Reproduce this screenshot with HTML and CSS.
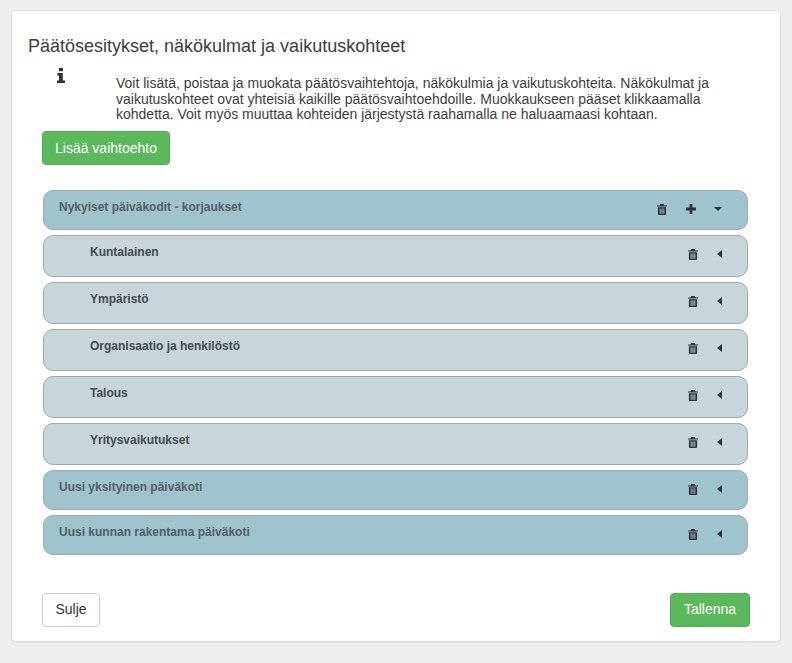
FILE: index.html
```html
<!DOCTYPE html>
<html lang="fi">
<head>
<meta charset="utf-8">
<title>Päätösesitykset</title>
<link rel="stylesheet" href="styles.css">
<svg class="sprite" width="0" height="0" aria-hidden="true">
  <symbol id="trash" viewBox="0 0 11 12">
    <path fill-rule="evenodd" d="M3.6 0h3.8l.8 1.5H11v1.2H0V1.5h2.8zM1 3.4h9V11a1 1 0 0 1-1 1H2a1 1 0 0 1-1-1zM3 4.8v5.8h1V4.8zm2 0v5.8h1V4.8zm2 0v5.8h1V4.8z"/>
  </symbol>
</svg>
</head>
<body>
<main class="card">
  <h1 class="title">Päätösesitykset, näkökulmat ja vaikutuskohteet</h1>
  <div class="info">
    <svg class="info-icon" viewBox="0 0 8 15" aria-hidden="true"><path d="M2 0h4v3.2H2zM.4 5h5.4v7.6H8V15H0v-2.4h2V7.4H.4z"/></svg>
    <p class="info-text">Voit lisätä, poistaa ja muokata päätösvaihtehtoja, näkökulmia ja vaikutuskohteita. Näkökulmat ja vaikutuskohteet ovat yhteisiä kaikille päätösvaihtoehdoille. Muokkaukseen pääset klikkaamalla kohdetta. Voit myös muuttaa kohteiden järjestystä raahamalla ne haluaamaasi kohtaan.</p>
  </div>
  <button class="btn btn-green add">Lisää vaihtoehto</button>
  <ul class="list">
    <li class="row parent first">
      <span class="label">Nykyiset päiväkodit - korjaukset</span>
      <span class="icons wide">
        <svg class="trash"><use href="#trash"/></svg>
        <svg class="plus" viewBox="0 0 10 10"><path d="M3.6 0h2.8v3.6H10v2.8H6.4V10H3.6V6.4H0V3.6h3.6z"/></svg>
        <i class="caret-down"></i>
      </span>
    </li>
    <li class="row child"><span class="label">Kuntalainen</span><span class="icons"><svg class="trash"><use href="#trash"/></svg><i class="caret-left"></i></span></li>
    <li class="row child"><span class="label">Ympäristö</span><span class="icons"><svg class="trash"><use href="#trash"/></svg><i class="caret-left"></i></span></li>
    <li class="row child"><span class="label">Organisaatio ja henkilöstö</span><span class="icons"><svg class="trash"><use href="#trash"/></svg><i class="caret-left"></i></span></li>
    <li class="row child"><span class="label">Talous</span><span class="icons"><svg class="trash"><use href="#trash"/></svg><i class="caret-left"></i></span></li>
    <li class="row child"><span class="label">Yritysvaikutukset</span><span class="icons"><svg class="trash"><use href="#trash"/></svg><i class="caret-left"></i></span></li>
    <li class="row parent"><span class="label">Uusi yksityinen päiväkoti</span><span class="icons"><svg class="trash"><use href="#trash"/></svg><i class="caret-left"></i></span></li>
    <li class="row parent"><span class="label">Uusi kunnan rakentama päiväkoti</span><span class="icons"><svg class="trash"><use href="#trash"/></svg><i class="caret-left"></i></span></li>
  </ul>
  <footer class="actions">
    <button class="btn btn-white close">Sulje</button>
    <button class="btn btn-green save">Tallenna</button>
  </footer>
</main>
</body>
</html>
```
FILE: styles.css
```css
* { box-sizing: border-box; }
html, body { height: 100%; }
body {
  margin: 0;
  padding: 10px 11px 21px 11px;
  background: #eeeeee;
  font-family: "Liberation Sans", Arial, sans-serif;
  color: #333;
}
.sprite { position: absolute; }
.card {
  width: 770px;
  height: 632px;
  padding: 25px 31px 0 16px;
  background: #fff;
  border: 1px solid #ddd;
  border-radius: 4px;
  box-shadow: 0 1px 1px rgba(0,0,0,.05);
}
.title {
  margin: 0;
  font-size: 18px;
  font-weight: 400;
  line-height: 20px;
  color: #3d3d3d;
}
.info {
  display: flex;
  height: 57px;
  margin-left: 29px;
  padding-top: 15px;
}
.info-icon {
  width: 8px;
  height: 15px;
  margin-top: -3px;
  fill: #333;
  flex: none;
}
.info-text {
  margin: 5px 0 0 51px;
  width: 610px;
  font-size: 14px;
  line-height: 15.5px;
  color: #3d3d3d;
}
.btn {
  display: block;
  height: 34px;
  padding: 0 12px;
  font: 14px/32px "Liberation Sans", Arial, sans-serif;
  border: 1px solid transparent;
  border-radius: 4px;
}
.btn-green { background: #5cb85c; border-color: #4cae4c; color: #fff; }
.btn-white { background: #fff; border-color: #ccc; color: #333; }
.add { margin: 18px 0 0 14px; }
.close { width: 58px; padding: 0 0 2px; line-height: 30px; }
.save { width: 80px; padding: 0 0 2px; line-height: 30px; }
.list {
  list-style: none;
  margin: 25px 0 0 15px;
  padding: 0;
  width: 705px;
  display: flex;
  flex-direction: column;
  gap: 5px;
}
.row {
  display: flex;
  justify-content: space-between;
  border: 1px solid #a3a9ac;
  border-radius: 10px;
  font-size: 12px;
  font-weight: 700;
  line-height: 14px;
}
.parent { height: 40px; padding: 9px 24px 0 15px; background: #a0c4ce; color: #525e64; }
.first { padding-right: 25px; }
.child { height: 42px; padding: 9px 24px 0 46px; background: #c8d5da; color: #444a4c; }
.icons {
  display: flex;
  align-items: center;
  height: 18px;
  gap: 19px;
}
.icons.wide { gap: 18.5px; }
.trash { width: 10px; height: 11px; fill: #2b3336; }
.plus { width: 10px; height: 10px; fill: #2b3336; }
.caret-left {
  width: 0; height: 0;
  margin-right: 1px;
  border-style: solid;
  border-width: 4px 5px 4px 0;
  border-color: transparent #2b3336 transparent transparent;
}
.caret-down {
  width: 0; height: 0;
  border-style: solid;
  border-width: 4px 4.5px 0 4.5px;
  border-color: #2b3336 transparent transparent transparent;
}
.actions {
  display: flex;
  justify-content: space-between;
  margin: 38px -1px 0 14px;
}
```
